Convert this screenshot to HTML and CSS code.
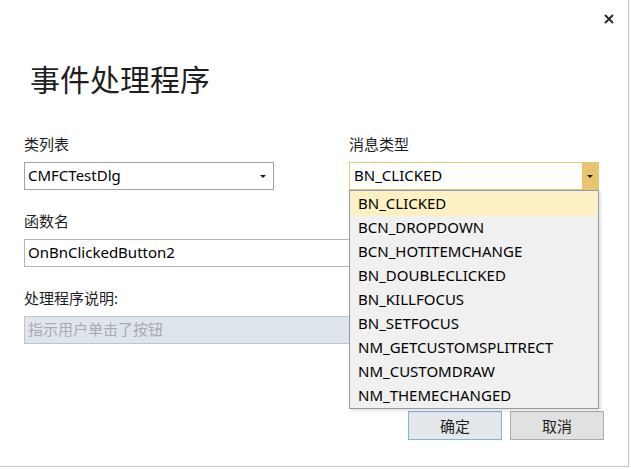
FILE: index.html
```html
<!DOCTYPE html>
<html lang="zh-CN">
<head>
<meta charset="utf-8">
<title>事件处理程序</title>
<link rel="stylesheet" href="styles.css">
</head>
<body>
<div class="dialog">
  <button class="close" aria-label="关闭">
    <svg width="10" height="10" viewBox="0 0 10 10"><path d="M1 1 L9 9 M9 1 L1 9" stroke="#2b2b2b" stroke-width="2" fill="none"/></svg>
  </button>
  <h1 class="title">事件处理程序</h1>
  <div class="row">
    <div class="field">
      <div class="label">类列表</div>
      <div class="combo">
        <span class="value">CMFCTestDlg</span>
        <span class="arrow-box"><span class="arrow"></span></span>
      </div>
    </div>
    <div class="field">
      <div class="label">消息类型</div>
      <div class="combo combo-open">
        <span class="value">BN_CLICKED</span>
        <span class="arrow-btn"><span class="arrow"></span></span>
        <ul class="dropdown">
          <li class="item selected">BN_CLICKED</li>
          <li class="item">BCN_DROPDOWN</li>
          <li class="item">BCN_HOTITEMCHANGE</li>
          <li class="item">BN_DOUBLECLICKED</li>
          <li class="item">BN_KILLFOCUS</li>
          <li class="item">BN_SETFOCUS</li>
          <li class="item">NM_GETCUSTOMSPLITRECT</li>
          <li class="item">NM_CUSTOMDRAW</li>
          <li class="item">NM_THEMECHANGED</li>
        </ul>
      </div>
    </div>
  </div>
  <div class="field wide">
    <div class="label">函数名</div>
    <div class="textbox"><span class="value">OnBnClickedButton2</span></div>
  </div>
  <div class="field wide">
    <div class="label">处理程序说明:</div>
    <div class="textbox disabled"><span class="value">指示用户单击了按钮</span></div>
  </div>
  <div class="buttons">
    <button class="btn btn-default">确定</button>
    <button class="btn">取消</button>
  </div>
</div>
</body>
</html>
```
FILE: styles.css
```css
html, body {
  margin: 0;
  padding: 0;
  background: #ffffff;
}
body {
  font-family: "Noto Sans", "Noto Sans CJK SC", sans-serif;
  font-size: 15px;
  color: #1e1e1e;
}
.dialog {
  position: relative;
  box-sizing: border-box;
  width: 629px;
  height: 467px;
  border-right: 1px solid #c6c6c6;
  border-bottom: 1px solid #c6c6c6;
  padding: 58px 0 0 24px;
  background: #ffffff;
}
.close {
  position: absolute;
  top: 14px;
  right: 14px;
  width: 10px;
  height: 10px;
  padding: 0;
  border: 0;
  background: transparent;
  display: flex;
}
.title {
  margin: 0 0 36px 6px;
  font-size: 30px;
  font-weight: normal;
  line-height: 40px;
  height: 40px;
  font-family: "Noto Sans CJK SC", sans-serif;
  color: #1e1e1e;
}
.row {
  display: flex;
  gap: 75px;
}
.field {
  width: 250px;
  margin-bottom: 21px;
}
.field.wide {
  width: 575px;
}
.label {
  line-height: 20px;
  height: 20px;
  margin-bottom: 8px;
  color: #1e1e1e;
}
.combo, .textbox {
  box-sizing: border-box;
  height: 28px;
  border: 1px solid #a2a2a2;
  background: #ffffff;
  display: flex;
  align-items: stretch;
}
.value {
  flex: 1;
  padding-left: 3px;
  line-height: 24px;
  padding-bottom: 2px;
  color: #000000;
  white-space: nowrap;
  overflow: hidden;
}
.arrow-box {
  width: 20px;
  display: flex;
  align-items: center;
  justify-content: center;
}
.arrow {
  width: 0;
  height: 0;
  border-left: 3px solid transparent;
  border-right: 3px solid transparent;
  border-top: 3px solid #1a1a1a;
}
.combo-open {
  position: relative;
  border-color: #e2c878;
}
.combo-open .value {
  padding-left: 4px;
}
.arrow-btn {
  width: 16px;
  background: #e8c46e;
  display: flex;
  align-items: center;
  justify-content: center;
}
.dropdown {
  position: absolute;
  top: calc(100% + 1px);
  left: -1px;
  box-sizing: border-box;
  width: 250px;
  margin: 0;
  padding: 1px 1px 0 1px;
  list-style: none;
  background: #f0f0f0;
  border: 1px solid #9a9a9a;
  box-shadow: 2px 2px 3px rgba(0, 0, 0, 0.12);
}
.item {
  height: 24px;
  line-height: 22px;
  padding-bottom: 2px;
  box-sizing: border-box;
  padding-left: 7px;
  color: #000000;
  white-space: nowrap;
}
.item.selected {
  background: #fdf0c2;
}
.textbox {
  border-color: #b4b4b4;
}
.textbox .value {
  padding-left: 3px;
}
.textbox.disabled {
  background: #dfe5ec;
  border-color: #c2c6cb;
}
.textbox.disabled .value {
  color: #a8abae;
}
.buttons {
  display: flex;
  justify-content: flex-end;
  gap: 8px;
  margin-top: 67px;
  margin-right: 24px;
}
.btn {
  box-sizing: border-box;
  width: 94px;
  height: 29px;
  border: 1px solid #adadad;
  background: #e1e1e1;
  font-family: "Noto Sans CJK SC", sans-serif;
  font-size: 15px;
  color: #1e1e1e;
  padding: 0;
}
.btn-default {
  border-color: #7eb4e2;
  background: #e4e8ec;
}
```
